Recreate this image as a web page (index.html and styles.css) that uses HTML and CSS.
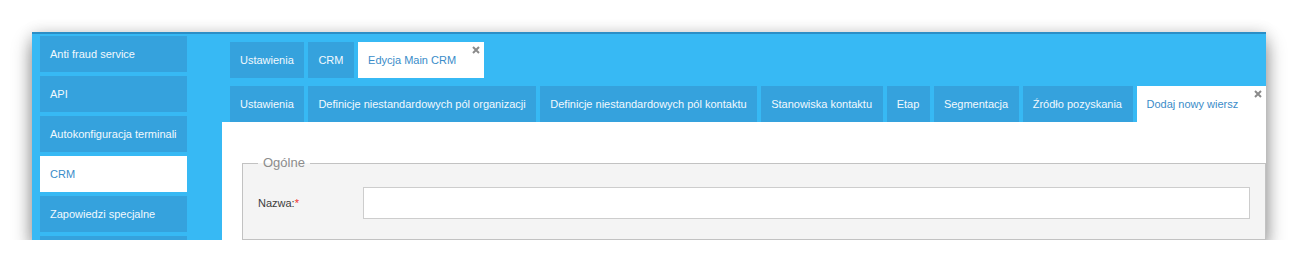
FILE: index.html
```html
<!doctype html>
<html>
<head>
    <meta charset="UTF-8">
    <title>Edycja Main CRM</title>
    <link rel="stylesheet" href="styles.css">
</head>
<body>
<div class="window">
    <div class="side">
        <div class="side-item">Anti fraud service</div>
        <div class="side-item">API</div>
        <div class="side-item">Autokonfiguracja terminali</div>
        <div class="side-item active">CRM</div>
        <div class="side-item">Zapowiedzi specjalne</div>
        <div class="side-item"></div>
    </div>
    <div class="main">
        <div class="tabs tabs-top">
            <div class="tab">Ustawienia</div>
            <div class="tab">CRM</div>
            <div class="tab active">Edycja Main CRM
                <svg class="close" width="8" height="8" viewBox="0 0 8 8"><path d="M1 1L7 7M7 1L1 7" stroke="#8a8a8a" stroke-width="2"/></svg>
            </div>
        </div>
        <div class="tabs tabs-sub">
            <div class="tab">Ustawienia</div>
            <div class="tab">Definicje niestandardowych pól organizacji</div>
            <div class="tab">Definicje niestandardowych pól kontaktu</div>
            <div class="tab">Stanowiska kontaktu</div>
            <div class="tab">Etap</div>
            <div class="tab">Segmentacja</div>
            <div class="tab">Źródło pozyskania</div>
            <div class="tab active">Dodaj nowy wiersz
                <svg class="close" width="8" height="8" viewBox="0 0 8 8"><path d="M1 1L7 7M7 1L1 7" stroke="#8a8a8a" stroke-width="2"/></svg>
            </div>
        </div>
        <div class="panel">
            <fieldset class="group">
                <legend>Ogólne</legend>
                <div class="row">
                    <label class="row-label">Nazwa:<span class="req">*</span></label>
                    <input class="row-input" type="text">
                </div>
            </fieldset>
        </div>
    </div>
</div>
</body>
</html>
```

FILE: styles.css
```css
* {
    margin: 0;
    padding: 0;
    box-sizing: border-box;
}

body {
    background-color: #fff;
    font-family: "Liberation Sans", Arial, sans-serif;
    font-size: 11px;
}

.window {
    display: flex;
    width: 1234px;
    height: 208px;
    margin: 32px 0 0 32px;
    padding: 2px 0 0 8px;
    overflow: hidden;
    background-color: #37b9f4;
    border-top: 2px solid #2b8ec6;
    box-shadow: 0 10px 18px rgba(0, 0, 0, .45), 0 0 14px rgba(0, 0, 0, .12);
}

.side {
    width: 147px;
    flex-shrink: 0;
    margin-right: 35px;
}

.side-item {
    height: 36px;
    line-height: 36px;
    margin-bottom: 4px;
    padding-left: 10px;
    background-color: #35a2dd;
    color: #f2f9fd;
    white-space: nowrap;
}

.side-item.active {
    background-color: #fff;
    color: #3a8cc9;
}

.main {
    flex: 1;
    display: flex;
    flex-direction: column;
    padding-top: 6px;
    min-width: 0;
}

.tabs {
    display: flex;
    gap: 4px;
    height: 36px;
    padding-left: 8px;
}

.tabs-top {
    margin-bottom: 8px;
}

.tab {
    position: relative;
    flex-shrink: 0;
    line-height: 36px;
    padding: 0 10.6px 0 10px;
    background-color: #35a2dd;
    color: #f2f9fd;
    white-space: nowrap;
}

.tab.active {
    background-color: #fff;
    color: #3a8cc9;
    padding-right: 28px;
}

.tab .close {
    position: absolute;
    top: 4px;
    right: 4px;
}

.panel {
    flex: 1;
    background-color: #fff;
    padding: 33px 0 0 20px;
}

.group {
    border: 1px solid #c2c2c2;
    background-color: #f4f4f4;
    padding: 0 15px 20px 15px;
    min-width: 0;
}

.group legend {
    padding: 0 5px;
    font-size: 13px;
    line-height: 16px;
    color: #8c8c8c;
}

.row {
    display: flex;
    align-items: center;
    margin-top: 16px;
}

.row-label {
    width: 105px;
    flex-shrink: 0;
    color: #3c3c3c;
}

.req {
    color: #f0302c;
}

.row-input {
    flex: 1;
    height: 32px;
    border: 1px solid #cdcdcd;
    background-color: #fff;
    outline: none;
}
```
